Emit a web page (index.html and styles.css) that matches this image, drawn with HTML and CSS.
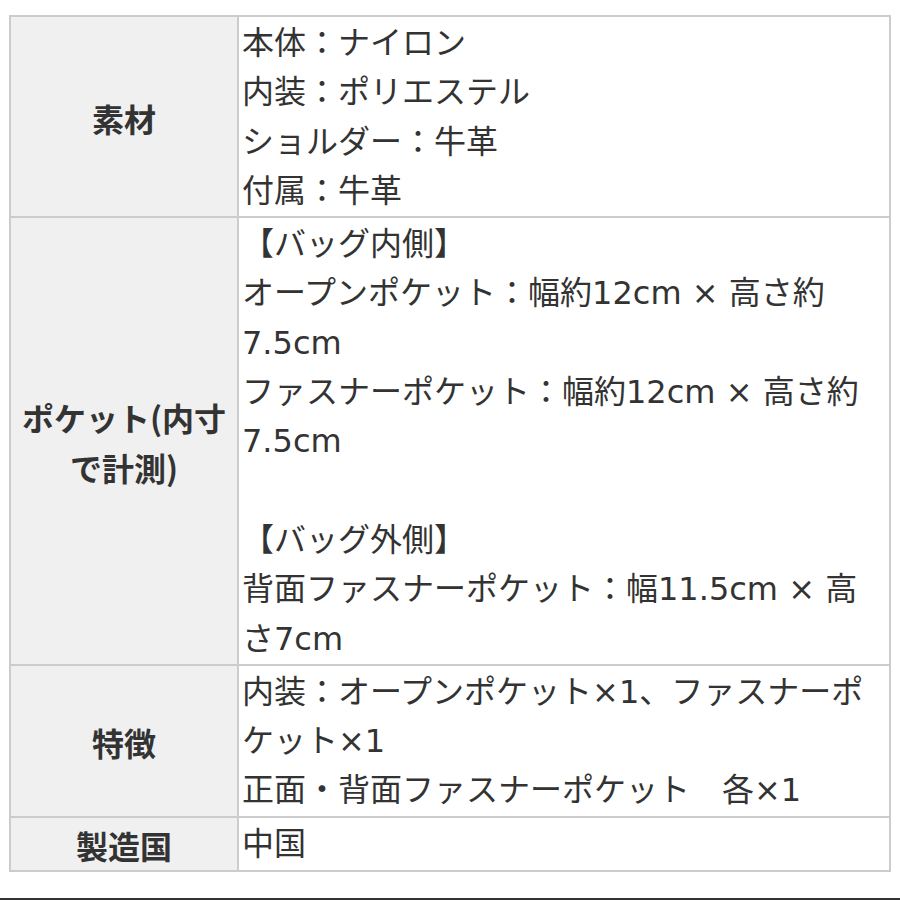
FILE: index.html
```html
<!DOCTYPE html>
<html lang="ja">
<head>
<meta charset="utf-8">
<link rel="stylesheet" href="styles.css">
</head>
<body>
<div class="page">
<table class="spec">
  <tr>
    <th>素材</th>
    <td>本体：ナイロン<br>内装：ポリエステル<br>ショルダー：牛革<br>付属：牛革</td>
  </tr>
  <tr>
    <th>ポケット(内寸で計測)</th>
    <td>【バッグ内側】<br>オープンポケット：幅約12cm × 高さ約7.5cm<br>ファスナーポケット：幅約12cm × 高さ約7.5cm<br><br>【バッグ外側】<br>背面ファスナーポケット：幅11.5cm × 高さ7cm</td>
  </tr>
  <tr>
    <th>特徴</th>
    <td>内装：オープンポケット×1、ファスナーポケット×1<br>正面・背面ファスナーポケット　各×1</td>
  </tr>
  <tr>
    <th>製造国</th>
    <td>中国</td>
  </tr>
</table>
</div>
<div class="bottom-bar"></div>
</body>
</html>
```
FILE: styles.css
```css
html, body {
  margin: 0;
  padding: 0;
  background: #fff;
}
.page {
  height: 898px;
  padding: 15px 0 0 9px;
  box-sizing: border-box;
}
.spec {
  border-collapse: collapse;
  width: 882px;
  table-layout: fixed;
  font-family: "DejaVu Sans", "Noto Sans CJK JP", sans-serif;
  font-size: 32px;
  line-height: 49.3px;
  color: #333;
}
.spec th, .spec td {
  border: 2px solid #cccccc;
  padding: 2px 3px 0;
  vertical-align: middle;
}
.spec th {
  width: 220px;
  background: #f0f0f0;
  font-family: "Noto Sans CJK JP", "Noto Sans", sans-serif;
  font-weight: bold;
  text-align: center;
  line-height: 50px;
}
.spec td {
  text-align: left;
  background: #fff;
  font-weight: normal;
}
.bottom-bar {
  height: 2px;
  background: #333;
}
```
